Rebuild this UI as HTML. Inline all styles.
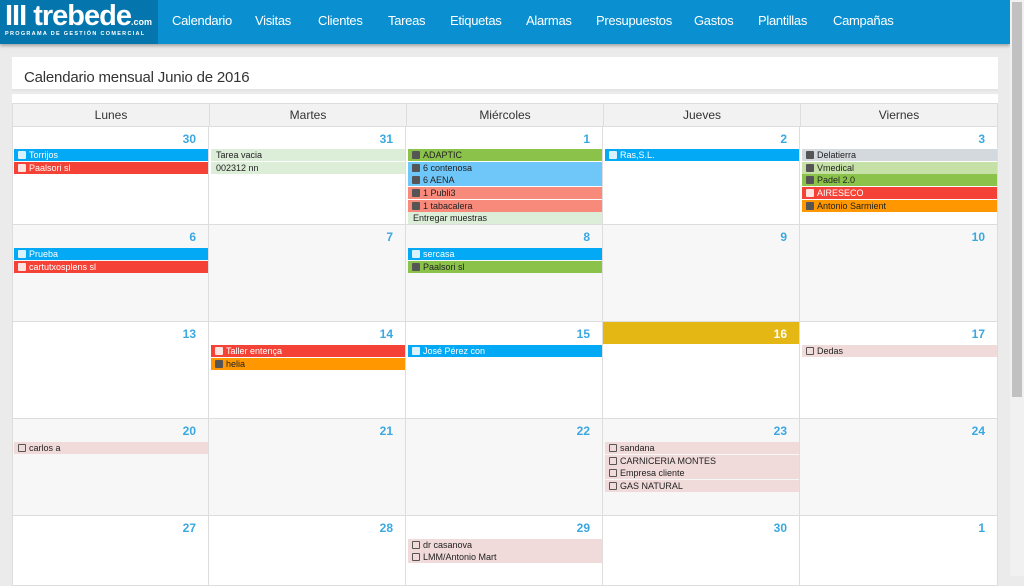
<!DOCTYPE html>
<html><head><meta charset="utf-8"><style>
*,*::before{box-sizing:border-box;margin:0;padding:0}
body{width:1024px;height:576px;overflow:hidden;background:#ebebeb;font-family:"Liberation Sans",sans-serif;position:relative}
.nav{position:absolute;left:0;top:0;width:1010px;height:44px;background:#0a90d0;box-shadow:0 2px 3px rgba(0,0,0,.3)}
.logo{position:absolute;left:0;top:0;width:158px;height:44px;background:#0576ad}
.logo .t{position:absolute;left:5px;top:1px;color:#fff;font-weight:bold;font-size:29px;letter-spacing:-1px;line-height:30px}
.logo .t small{font-size:9px;letter-spacing:0}
.logo .s{position:absolute;left:5px;top:31px;color:#fff;font-size:5.5px;font-weight:bold;letter-spacing:1.3px}
.nav a{position:absolute;top:13px;color:#fff;font-size:13px;letter-spacing:-0.3px;text-decoration:none}
.sb{position:absolute;left:1010px;top:0;width:14px;height:576px;background:#f1f1f1}
.sb div{position:absolute;left:2px;top:2px;width:10px;height:395px;background:#c1c1c1}
.card{position:absolute;left:12px;top:57px;width:986px;height:34px;background:#fff;border-bottom:2px solid #e4e4e4}
.card h1{font-weight:normal;font-size:15px;letter-spacing:-0.2px;color:#333;position:absolute;left:12px;top:12px}
.cal{position:absolute;left:12px;top:94px;width:986px;height:490px;background:#fff}
.hd{position:absolute;top:103px;height:24px;background:#f2f2f2;border:1px solid #ddd;font-size:12px;color:#333;text-align:center;line-height:22px}
.c{position:absolute;border-right:1px solid #ddd;border-bottom:1px solid #ddd}
.n{position:absolute;right:12px;top:5px;color:#3aa8e0;font-weight:bold;font-size:12px}
.e{position:absolute;height:12px;font-size:9px;line-height:12px;padding-left:15px;color:#222;white-space:nowrap;overflow:hidden}
.e:before{content:"";position:absolute;left:4px;top:2px;width:8px;height:8px;background:#555;border-radius:1px}
.e.w{color:#fff}.e.w:before{background:#fff;opacity:.85}
.e.u:before{background:none;border:1px solid #555}
.e.n0:before{display:none}.e.n0{padding-left:5px}
</style></head><body>
<div class="nav"><div class="logo"><div class="t">III trebede<small>.com</small></div><div class="s">PROGRAMA DE GESTIÓN COMERCIAL</div></div>
<a style="left:172px">Calendario</a><a style="left:255px">Visitas</a><a style="left:318px">Clientes</a><a style="left:388px">Tareas</a><a style="left:450px">Etiquetas</a><a style="left:526px">Alarmas</a><a style="left:596px">Presupuestos</a><a style="left:694px">Gastos</a><a style="left:758px">Plantillas</a><a style="left:833px">Campañas</a></div>
<div class="sb"><div></div></div>
<div class="card"><h1>Calendario mensual Junio de 2016</h1></div>
<div class="cal"></div>
<div class="hd" style="left:12px;width:198px">Lunes</div><div class="hd" style="left:209px;width:198px">Martes</div><div class="hd" style="left:406px;width:198px">Miércoles</div><div class="hd" style="left:603px;width:198px">Jueves</div><div class="hd" style="left:800px;width:198px">Viernes</div>
<div class="c" style="left:12px;top:127px;width:197px;height:98px;background:#fff;border-left:1px solid #ddd"><span class="n">30</span></div>
<div class="c" style="left:209px;top:127px;width:197px;height:98px;background:#fff"><span class="n">31</span></div>
<div class="c" style="left:406px;top:127px;width:197px;height:98px;background:#fff"><span class="n">1</span></div>
<div class="c" style="left:603px;top:127px;width:197px;height:98px;background:#fff"><span class="n">2</span></div>
<div class="c" style="left:800px;top:127px;width:198px;height:98px;background:#fff"><span class="n">3</span></div>
<div class="c" style="left:12px;top:225px;width:197px;height:97px;background:#f7f7f7;border-left:1px solid #ddd"><span class="n">6</span></div>
<div class="c" style="left:209px;top:225px;width:197px;height:97px;background:#f7f7f7"><span class="n">7</span></div>
<div class="c" style="left:406px;top:225px;width:197px;height:97px;background:#f7f7f7"><span class="n">8</span></div>
<div class="c" style="left:603px;top:225px;width:197px;height:97px;background:#f7f7f7"><span class="n">9</span></div>
<div class="c" style="left:800px;top:225px;width:198px;height:97px;background:#f7f7f7"><span class="n">10</span></div>
<div class="c" style="left:12px;top:322px;width:197px;height:97px;background:#fff;border-left:1px solid #ddd"><span class="n">13</span></div>
<div class="c" style="left:209px;top:322px;width:197px;height:97px;background:#fff"><span class="n">14</span></div>
<div class="c" style="left:406px;top:322px;width:197px;height:97px;background:#fff"><span class="n">15</span></div>
<div class="c" style="left:603px;top:322px;width:197px;height:97px;background:#fff"><div style="position:absolute;left:0;top:0;right:0;height:22px;background:#e5b714"></div><span class="n" style="color:#fff">16</span></div>
<div class="c" style="left:800px;top:322px;width:198px;height:97px;background:#fff"><span class="n">17</span></div>
<div class="c" style="left:12px;top:419px;width:197px;height:97px;background:#f7f7f7;border-left:1px solid #ddd"><span class="n">20</span></div>
<div class="c" style="left:209px;top:419px;width:197px;height:97px;background:#f7f7f7"><span class="n">21</span></div>
<div class="c" style="left:406px;top:419px;width:197px;height:97px;background:#f7f7f7"><span class="n">22</span></div>
<div class="c" style="left:603px;top:419px;width:197px;height:97px;background:#f7f7f7"><span class="n">23</span></div>
<div class="c" style="left:800px;top:419px;width:198px;height:97px;background:#f7f7f7"><span class="n">24</span></div>
<div class="c" style="left:12px;top:516px;width:197px;height:70px;background:#fff;border-left:1px solid #ddd"><span class="n">27</span></div>
<div class="c" style="left:209px;top:516px;width:197px;height:70px;background:#fff"><span class="n">28</span></div>
<div class="c" style="left:406px;top:516px;width:197px;height:70px;background:#fff"><span class="n">29</span></div>
<div class="c" style="left:603px;top:516px;width:197px;height:70px;background:#fff"><span class="n">30</span></div>
<div class="c" style="left:800px;top:516px;width:198px;height:70px;background:#fff"><span class="n">1</span></div>
<div class="e w" style="left:14px;top:149px;width:194px;background:#03a9f4">Torrijos</div>
<div class="e w" style="left:14px;top:162px;width:194px;background:#f44336">Paalsori sl</div>
<div class="e n0" style="left:211px;top:149px;width:194px;background:#dcedd8">Tarea vacia</div>
<div class="e n0" style="left:211px;top:162px;width:194px;background:#dcedd8">002312 nn</div>
<div class="e" style="left:408px;top:149px;width:194px;background:#8bc34a">ADAPTIC</div>
<div class="e" style="left:408px;top:162px;width:194px;background:#6ec6f9">6 contenosa</div>
<div class="e" style="left:408px;top:174px;width:194px;background:#6ec6f9">6 AENA</div>
<div class="e" style="left:408px;top:187px;width:194px;background:#f88a7c">1 Publi3</div>
<div class="e" style="left:408px;top:200px;width:194px;background:#f88a7c">1 tabacalera</div>
<div class="e n0" style="left:408px;top:212px;width:194px;background:#dcedd8">Entregar muestras</div>
<div class="e w" style="left:605px;top:149px;width:194px;background:#03a9f4">Ras,S.L.</div>
<div class="e" style="left:802px;top:149px;width:195px;background:#d4d9de">Delatierra</div>
<div class="e" style="left:802px;top:162px;width:195px;background:#c5e1a5">Vmedical</div>
<div class="e" style="left:802px;top:174px;width:195px;background:#8bc34a">Padel 2.0</div>
<div class="e w" style="left:802px;top:187px;width:195px;background:#f44336">AIRESECO</div>
<div class="e" style="left:802px;top:200px;width:195px;background:#ff9800">Antonio Sarmient</div>
<div class="e w" style="left:14px;top:248px;width:194px;background:#03a9f4">Prueba</div>
<div class="e w" style="left:14px;top:261px;width:194px;background:#f44336">cartutxosplens sl</div>
<div class="e w" style="left:408px;top:248px;width:194px;background:#03a9f4">sercasa</div>
<div class="e" style="left:408px;top:261px;width:194px;background:#8bc34a">Paalsori sl</div>
<div class="e w" style="left:211px;top:345px;width:194px;background:#f44336">Taller entença</div>
<div class="e" style="left:211px;top:358px;width:194px;background:#ff9800">helia</div>
<div class="e w" style="left:408px;top:345px;width:194px;background:#03a9f4">José Pérez con</div>
<div class="e u" style="left:802px;top:345px;width:195px;background:#f0dada">Dedas</div>
<div class="e u" style="left:14px;top:442px;width:194px;background:#f0dada">carlos a</div>
<div class="e u" style="left:605px;top:442px;width:194px;background:#f0dada">sandana</div>
<div class="e u" style="left:605px;top:455px;width:194px;background:#f0dada">CARNICERIA MONTES</div>
<div class="e u" style="left:605px;top:467px;width:194px;background:#f0dada">Empresa cliente</div>
<div class="e u" style="left:605px;top:480px;width:194px;background:#f0dada">GAS NATURAL</div>
<div class="e u" style="left:408px;top:539px;width:194px;background:#f0dada">dr casanova</div>
<div class="e u" style="left:408px;top:551px;width:194px;background:#f0dada">LMM/Antonio Mart</div>
</body></html>
